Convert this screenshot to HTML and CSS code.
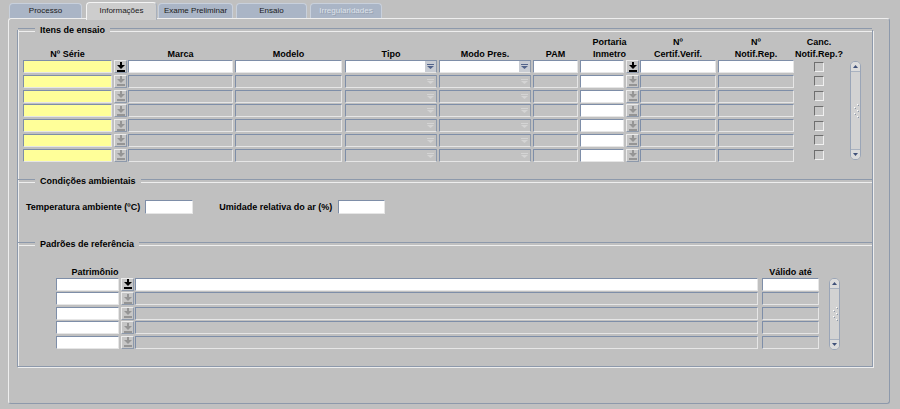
FILE: index.html
```html
<!DOCTYPE html>
<html lang="pt">
<head>
<meta charset="utf-8">
<title>Informações</title>
<link rel="stylesheet" href="styles.css">
</head>
<body>
<div class="tabs">
  <div class="tab t1">Processo</div>
  <div class="tab t2 sel">Informações</div>
  <div class="tab t3">Exame Preliminar</div>
  <div class="tab t4">Ensaio</div>
  <div class="tab t5 dis">Irregularidades</div>
</div>
<div class="panel">
  <div class="frame">
    <div class="legend first"><span>Itens de ensaio</span></div>
    <div class="items">
      <div class="grid">
        <div class="hrow">
          <div class="h w-serie">Nº Série</div>
          <div class="h w-lov ml2"></div>
          <div class="h w-marca ml1">Marca</div>
          <div class="h w-modelo ml2">Modelo</div>
          <div class="h w-tipo ml3">Tipo</div>
          <div class="h w-modo ml2">Modo Pres.</div>
          <div class="h w-pam ml2">PAM</div>
          <div class="h w-porth ml2">Portaria<br>Inmetro</div>
          <div class="h w-cert ml1">Nº<br>Certif.Verif.</div>
          <div class="h w-notif ml2">Nº<br>Notif.Rep.</div>
          <div class="h w-chk">Canc.<br>Notif.Rep.?</div>
        </div>
        <div class="row">
          <div class="f yel w-serie"></div>
          <div class="lov on ml2"><svg width="8" height="10" viewBox="0 0 8 10"><path d="M3 0h2v3h3L4 7 0 3h3z"/><rect y="8" width="8" height="2"/></svg></div>
          <div class="f wht w-marca ml1"></div>
          <div class="f wht w-modelo ml2"></div>
          <div class="f wht dd w-tipo ml3"><i><svg width="7" height="5" viewBox="0 0 7 5"><rect width="7" height="1"/><path d="M0 2h7L3.5 5z"/></svg></i></div>
          <div class="f wht dd w-modo ml2"><i><svg width="7" height="5" viewBox="0 0 7 5"><rect width="7" height="1"/><path d="M0 2h7L3.5 5z"/></svg></i></div>
          <div class="f wht w-pam ml2"></div>
          <div class="f wht w-port ml2"></div>
          <div class="lov on ml2"><svg width="8" height="10" viewBox="0 0 8 10"><path d="M3 0h2v3h3L4 7 0 3h3z"/><rect y="8" width="8" height="2"/></svg></div>
          <div class="f wht w-cert ml1"></div>
          <div class="f wht w-notif ml2"></div>
          <div class="w-chk chkc"><div class="chk"></div></div>
        </div>
        <div class="row">
          <div class="f yel w-serie"></div>
          <div class="lov ml2"><svg width="8" height="10" viewBox="0 0 8 10"><path d="M3 0h2v3h3L4 7 0 3h3z"/><rect y="8" width="8" height="2"/></svg></div>
          <div class="f gry w-marca ml1"></div>
          <div class="f gry w-modelo ml2"></div>
          <div class="f gry dd w-tipo ml3"><i><svg width="7" height="5" viewBox="0 0 7 5"><rect width="7" height="1"/><path d="M0 2h7L3.5 5z"/></svg></i></div>
          <div class="f gry dd w-modo ml2"><i><svg width="7" height="5" viewBox="0 0 7 5"><rect width="7" height="1"/><path d="M0 2h7L3.5 5z"/></svg></i></div>
          <div class="f gry w-pam ml2"></div>
          <div class="f wht w-port ml2"></div>
          <div class="lov ml2"><svg width="8" height="10" viewBox="0 0 8 10"><path d="M3 0h2v3h3L4 7 0 3h3z"/><rect y="8" width="8" height="2"/></svg></div>
          <div class="f gry w-cert ml1"></div>
          <div class="f gry w-notif ml2"></div>
          <div class="w-chk chkc"><div class="chk"></div></div>
        </div>
        <div class="row">
          <div class="f yel w-serie"></div>
          <div class="lov ml2"><svg width="8" height="10" viewBox="0 0 8 10"><path d="M3 0h2v3h3L4 7 0 3h3z"/><rect y="8" width="8" height="2"/></svg></div>
          <div class="f gry w-marca ml1"></div>
          <div class="f gry w-modelo ml2"></div>
          <div class="f gry dd w-tipo ml3"><i><svg width="7" height="5" viewBox="0 0 7 5"><rect width="7" height="1"/><path d="M0 2h7L3.5 5z"/></svg></i></div>
          <div class="f gry dd w-modo ml2"><i><svg width="7" height="5" viewBox="0 0 7 5"><rect width="7" height="1"/><path d="M0 2h7L3.5 5z"/></svg></i></div>
          <div class="f gry w-pam ml2"></div>
          <div class="f wht w-port ml2"></div>
          <div class="lov ml2"><svg width="8" height="10" viewBox="0 0 8 10"><path d="M3 0h2v3h3L4 7 0 3h3z"/><rect y="8" width="8" height="2"/></svg></div>
          <div class="f gry w-cert ml1"></div>
          <div class="f gry w-notif ml2"></div>
          <div class="w-chk chkc"><div class="chk"></div></div>
        </div>
        <div class="row">
          <div class="f yel w-serie"></div>
          <div class="lov ml2"><svg width="8" height="10" viewBox="0 0 8 10"><path d="M3 0h2v3h3L4 7 0 3h3z"/><rect y="8" width="8" height="2"/></svg></div>
          <div class="f gry w-marca ml1"></div>
          <div class="f gry w-modelo ml2"></div>
          <div class="f gry dd w-tipo ml3"><i><svg width="7" height="5" viewBox="0 0 7 5"><rect width="7" height="1"/><path d="M0 2h7L3.5 5z"/></svg></i></div>
          <div class="f gry dd w-modo ml2"><i><svg width="7" height="5" viewBox="0 0 7 5"><rect width="7" height="1"/><path d="M0 2h7L3.5 5z"/></svg></i></div>
          <div class="f gry w-pam ml2"></div>
          <div class="f wht w-port ml2"></div>
          <div class="lov ml2"><svg width="8" height="10" viewBox="0 0 8 10"><path d="M3 0h2v3h3L4 7 0 3h3z"/><rect y="8" width="8" height="2"/></svg></div>
          <div class="f gry w-cert ml1"></div>
          <div class="f gry w-notif ml2"></div>
          <div class="w-chk chkc"><div class="chk"></div></div>
        </div>
        <div class="row">
          <div class="f yel w-serie"></div>
          <div class="lov ml2"><svg width="8" height="10" viewBox="0 0 8 10"><path d="M3 0h2v3h3L4 7 0 3h3z"/><rect y="8" width="8" height="2"/></svg></div>
          <div class="f gry w-marca ml1"></div>
          <div class="f gry w-modelo ml2"></div>
          <div class="f gry dd w-tipo ml3"><i><svg width="7" height="5" viewBox="0 0 7 5"><rect width="7" height="1"/><path d="M0 2h7L3.5 5z"/></svg></i></div>
          <div class="f gry dd w-modo ml2"><i><svg width="7" height="5" viewBox="0 0 7 5"><rect width="7" height="1"/><path d="M0 2h7L3.5 5z"/></svg></i></div>
          <div class="f gry w-pam ml2"></div>
          <div class="f wht w-port ml2"></div>
          <div class="lov ml2"><svg width="8" height="10" viewBox="0 0 8 10"><path d="M3 0h2v3h3L4 7 0 3h3z"/><rect y="8" width="8" height="2"/></svg></div>
          <div class="f gry w-cert ml1"></div>
          <div class="f gry w-notif ml2"></div>
          <div class="w-chk chkc"><div class="chk"></div></div>
        </div>
        <div class="row">
          <div class="f yel w-serie"></div>
          <div class="lov ml2"><svg width="8" height="10" viewBox="0 0 8 10"><path d="M3 0h2v3h3L4 7 0 3h3z"/><rect y="8" width="8" height="2"/></svg></div>
          <div class="f gry w-marca ml1"></div>
          <div class="f gry w-modelo ml2"></div>
          <div class="f gry dd w-tipo ml3"><i><svg width="7" height="5" viewBox="0 0 7 5"><rect width="7" height="1"/><path d="M0 2h7L3.5 5z"/></svg></i></div>
          <div class="f gry dd w-modo ml2"><i><svg width="7" height="5" viewBox="0 0 7 5"><rect width="7" height="1"/><path d="M0 2h7L3.5 5z"/></svg></i></div>
          <div class="f gry w-pam ml2"></div>
          <div class="f wht w-port ml2"></div>
          <div class="lov ml2"><svg width="8" height="10" viewBox="0 0 8 10"><path d="M3 0h2v3h3L4 7 0 3h3z"/><rect y="8" width="8" height="2"/></svg></div>
          <div class="f gry w-cert ml1"></div>
          <div class="f gry w-notif ml2"></div>
          <div class="w-chk chkc"><div class="chk"></div></div>
        </div>
        <div class="row">
          <div class="f yel w-serie"></div>
          <div class="lov ml2"><svg width="8" height="10" viewBox="0 0 8 10"><path d="M3 0h2v3h3L4 7 0 3h3z"/><rect y="8" width="8" height="2"/></svg></div>
          <div class="f gry w-marca ml1"></div>
          <div class="f gry w-modelo ml2"></div>
          <div class="f gry dd w-tipo ml3"><i><svg width="7" height="5" viewBox="0 0 7 5"><rect width="7" height="1"/><path d="M0 2h7L3.5 5z"/></svg></i></div>
          <div class="f gry dd w-modo ml2"><i><svg width="7" height="5" viewBox="0 0 7 5"><rect width="7" height="1"/><path d="M0 2h7L3.5 5z"/></svg></i></div>
          <div class="f gry w-pam ml2"></div>
          <div class="f wht w-port ml2"></div>
          <div class="lov ml2"><svg width="8" height="10" viewBox="0 0 8 10"><path d="M3 0h2v3h3L4 7 0 3h3z"/><rect y="8" width="8" height="2"/></svg></div>
          <div class="f gry w-cert ml1"></div>
          <div class="f gry w-notif ml2"></div>
          <div class="w-chk chkc"><div class="chk"></div></div>
        </div>
      </div>
      <div class="scroll s-items">
        <div class="sb up"><svg width="5" height="3" viewBox="0 0 5 3"><path d="M0 3h5L2.5 0z"/></svg></div>
        <div class="strack"><svg width="6" height="14" viewBox="0 0 6 14"><g fill="#fff"><rect x="4" y="0" width="1" height="1"/><rect x="4" y="6" width="1" height="1"/><rect x="4" y="12" width="1" height="1"/><rect x="1" y="3" width="1" height="1"/><rect x="1" y="9" width="1" height="1"/></g><g fill="#8a96a8"><rect x="5" y="1" width="1" height="1"/><rect x="5" y="7" width="1" height="1"/><rect x="5" y="13" width="1" height="1"/><rect x="2" y="4" width="1" height="1"/><rect x="2" y="10" width="1" height="1"/></g></svg></div>
        <div class="sb dn"><svg width="5" height="3" viewBox="0 0 5 3"><path d="M0 0h5L2.5 3z"/></svg></div>
      </div>
    </div>

    <div class="legend sec2"><span>Condições ambientais</span></div>
    <div class="amb">
      <label class="lbl">Temperatura ambiente (ºC)</label>
      <div class="f wht w-temp"></div>
      <label class="lbl lbl2">Umidade relativa do ar (%)</label>
      <div class="f wht w-umid"></div>
    </div>

    <div class="legend sec3"><span>Padrões de referência</span></div>
    <div class="pad">
      <div class="grid">
        <div class="phead">
          <div class="h w-patrh">Patrimônio</div>
          <div class="h w-desc ml1"></div>
          <div class="h w-val ml4">Válido até</div>
        </div>
        <div class="prow">
          <div class="f wht w-pat"></div>
          <div class="lov on ml2"><svg width="8" height="10" viewBox="0 0 8 10"><path d="M3 0h2v3h3L4 7 0 3h3z"/><rect y="8" width="8" height="2"/></svg></div>
          <div class="f wht w-desc ml1"></div>
          <div class="f wht w-val ml4"></div>
        </div>
        <div class="prow">
          <div class="f wht w-pat"></div>
          <div class="lov ml2"><svg width="8" height="10" viewBox="0 0 8 10"><path d="M3 0h2v3h3L4 7 0 3h3z"/><rect y="8" width="8" height="2"/></svg></div>
          <div class="f gry w-desc ml1"></div>
          <div class="f gry w-val ml4"></div>
        </div>
        <div class="prow">
          <div class="f wht w-pat"></div>
          <div class="lov ml2"><svg width="8" height="10" viewBox="0 0 8 10"><path d="M3 0h2v3h3L4 7 0 3h3z"/><rect y="8" width="8" height="2"/></svg></div>
          <div class="f gry w-desc ml1"></div>
          <div class="f gry w-val ml4"></div>
        </div>
        <div class="prow">
          <div class="f wht w-pat"></div>
          <div class="lov ml2"><svg width="8" height="10" viewBox="0 0 8 10"><path d="M3 0h2v3h3L4 7 0 3h3z"/><rect y="8" width="8" height="2"/></svg></div>
          <div class="f gry w-desc ml1"></div>
          <div class="f gry w-val ml4"></div>
        </div>
        <div class="prow">
          <div class="f wht w-pat"></div>
          <div class="lov ml2"><svg width="8" height="10" viewBox="0 0 8 10"><path d="M3 0h2v3h3L4 7 0 3h3z"/><rect y="8" width="8" height="2"/></svg></div>
          <div class="f gry w-desc ml1"></div>
          <div class="f gry w-val ml4"></div>
        </div>
      </div>
      <div class="scroll s-pad">
        <div class="sb up"><svg width="5" height="3" viewBox="0 0 5 3"><path d="M0 3h5L2.5 0z"/></svg></div>
        <div class="strack"><svg width="6" height="14" viewBox="0 0 6 14"><g fill="#fff"><rect x="4" y="0" width="1" height="1"/><rect x="4" y="6" width="1" height="1"/><rect x="4" y="12" width="1" height="1"/><rect x="1" y="3" width="1" height="1"/><rect x="1" y="9" width="1" height="1"/></g><g fill="#8a96a8"><rect x="5" y="1" width="1" height="1"/><rect x="5" y="7" width="1" height="1"/><rect x="5" y="13" width="1" height="1"/><rect x="2" y="4" width="1" height="1"/><rect x="2" y="10" width="1" height="1"/></g></svg></div>
        <div class="sb dn"><svg width="5" height="3" viewBox="0 0 5 3"><path d="M0 0h5L2.5 3z"/></svg></div>
      </div>
    </div>
  </div>
</div>
</body>
</html>
```

FILE: styles.css
```css
* { box-sizing: border-box; margin: 0; padding: 0; }
html, body { background: #c0c0c0; }
body {
  width: 900px;
  height: 409px;
  overflow: hidden;
  font-family: "Liberation Sans", Arial, sans-serif;
  font-size: 9px;
  color: #000;
}

/* Tabs */
.tabs {
  display: flex;
  align-items: flex-end;
  height: 18px;
  padding-left: 9px;
}
.tab {
  height: 15px;
  line-height: 14px;
  font-size: 8px;
  text-align: center;
  white-space: nowrap;
  background: #aab5c6;
  border: 1px solid #c8d0dc;
  border-bottom: none;
  border-radius: 4px 4px 0 0;
  color: #1a1a1a;
}
.t1 { width: 73px; }
.t2 { width: 71px; margin-left: 4px; }
.t3 { width: 75px; margin-left: 1px; }
.t4 { width: 71px; margin-left: 3px; }
.t5 { width: 72px; margin-left: 3px; }
.tab.sel {
  position: relative;
  z-index: 2;
  height: 18px;
  line-height: 16px;
  margin-bottom: -2px;
  background: #cdcdcd;
  border-color: #f4f4f4 #a8b0bc #cdcdcd #f4f4f4;
}
.tab.dis {
  color: #dde2ea;
  text-shadow: 1px 1px 0 #98a2b2;
}

/* Panel */
.panel {
  margin-left: 8px;
  width: 882px;
  height: 386px;
  border: 1px solid;
  border-color: #eeeeee #8d99ab #8d99ab #eeeeee;
  border-radius: 3px;
  padding: 11px 0 0 8px;
}
.frame {
  display: flow-root;
  width: 856px;
  height: 337px;
  border: 1px solid #8d99ab;
  border-top: none;
  box-shadow: inset 1px 0 0 #eeeeee, 1px 1px 0 #eeeeee;
}

/* Legends */
.legend {
  display: flex;
  align-items: center;
  height: 12px;
  font-weight: bold;
  white-space: nowrap;
}
.legend::before, .legend::after {
  content: "";
  height: 2px;
  border-top: 1px solid #8d99ab;
  border-bottom: 1px solid #eeeeee;
}
.legend::before { width: 17px; }
.legend::after { flex: 1; }
.legend span { padding: 0 5px; }
.legend.first { margin-top: -6px; }
.legend.sec2 { margin-top: 11px; }
.legend.sec3 { margin-top: 24px; }

/* Items block */
.items {
  display: flex;
  align-items: flex-start;
  padding-left: 5px;
}
.grid { display: flex; flex-direction: column; }
.hrow {
  display: flex;
  height: 24px;
}
.h {
  display: flex;
  align-items: flex-end;
  justify-content: center;
  text-align: center;
  font-weight: bold;
  line-height: 12px;
  white-space: nowrap;
}
.row {
  display: flex;
  height: 13px;
  margin-bottom: 1.8px;
}

.ml1 { margin-left: 1px; }
.ml2 { margin-left: 2px; }
.ml3 { margin-left: 3px; }
.ml4 { margin-left: 4px; }

.w-serie { width: 89px; }
.w-lov { width: 13px; }
.w-marca { width: 105px; }
.w-modelo { width: 107px; }
.w-tipo { width: 92px; }
.w-modo { width: 92px; }
.w-pam { width: 45px; }
.w-port { width: 44px; }
.w-porth { width: 59px; }
.w-cert { width: 76px; }
.w-notif { width: 76px; }
.w-chk { width: 50px; }

/* Fields */
.f {
  height: 100%;
  border: 1px solid;
  border-color: #7e8ea8 #e6e6e6 #e6e6e6 #7e8ea8;
}
.yel { background: #ffff99; }
.wht { background: #ffffff; }
.gry { background: #c2c2c2; }
.dd {
  display: flex;
  justify-content: flex-end;
  border-right-color: #8d99ab;
}
.dd i {
  display: flex;
  align-items: center;
  justify-content: center;
  width: 11px;
  height: 100%;
  background: #c8ccd3;
  color: #52638a;
}
.gry.dd i { background: #c2c2c2; color: #d4d4d4; }
.dd svg { fill: currentColor; display: block; }

.lov {
  width: 13px;
  height: 13px;
  display: flex;
  align-items: center;
  justify-content: center;
  background: #c6c6c6;
  border: 1px solid;
  border-color: #ececec #8d99ab #8d99ab #ececec;
  color: #959595;
}
.lov.on { color: #000; }
.lov svg { fill: currentColor; display: block; }

.chkc {
  display: flex;
  align-items: center;
  justify-content: center;
}
.chk {
  width: 10px;
  height: 10px;
  background: #c6c6c6;
  border: 1px solid;
  border-color: #6e6e6e #f0f0f0 #f0f0f0 #6e6e6e;
}

/* Scrollbars */
.scroll {
  width: 11px;
  display: flex;
  flex-direction: column;
  background: #d2d2d2;
  border: 1px solid #9aa5b7;
  border-radius: 5px;
}
.s-items { margin-left: 6px; margin-top: 25px; height: 99px; }
.s-pad { margin-left: 10px; margin-top: 12px; height: 72px; }
.sb {
  height: 10px;
  display: flex;
  align-items: center;
  justify-content: center;
  background: #dcdcdc;
}
.sb svg { fill: #3f5078; display: block; }
.sb.up { border-bottom: 1px solid #a9b2c0; border-radius: 4px 4px 0 0; }
.sb.dn { border-top: 1px solid #a9b2c0; border-radius: 0 0 4px 4px; }
.strack {
  flex: 1;
  display: flex;
  align-items: center;
  justify-content: center;
}

/* Condições */
.amb {
  display: flex;
  align-items: center;
  height: 14px;
  margin-top: 13px;
  padding-left: 8px;
}
.lbl { font-weight: bold; white-space: nowrap; }
.w-temp { width: 48px; margin-left: 5px; }
.lbl2 { margin-left: 26px; }
.w-umid { width: 47px; margin-left: 6px; }

/* Padrões */
.pad {
  display: flex;
  align-items: flex-start;
  margin-top: 16px;
  padding-left: 38px;
}
.phead { display: flex; height: 12px; }
.prow {
  display: flex;
  height: 13px;
  margin-bottom: 1.6px;
}
.w-pat { width: 63px; }
.w-patrh { width: 78px; }
.w-desc { width: 623px; }
.w-val { width: 57px; }
```
